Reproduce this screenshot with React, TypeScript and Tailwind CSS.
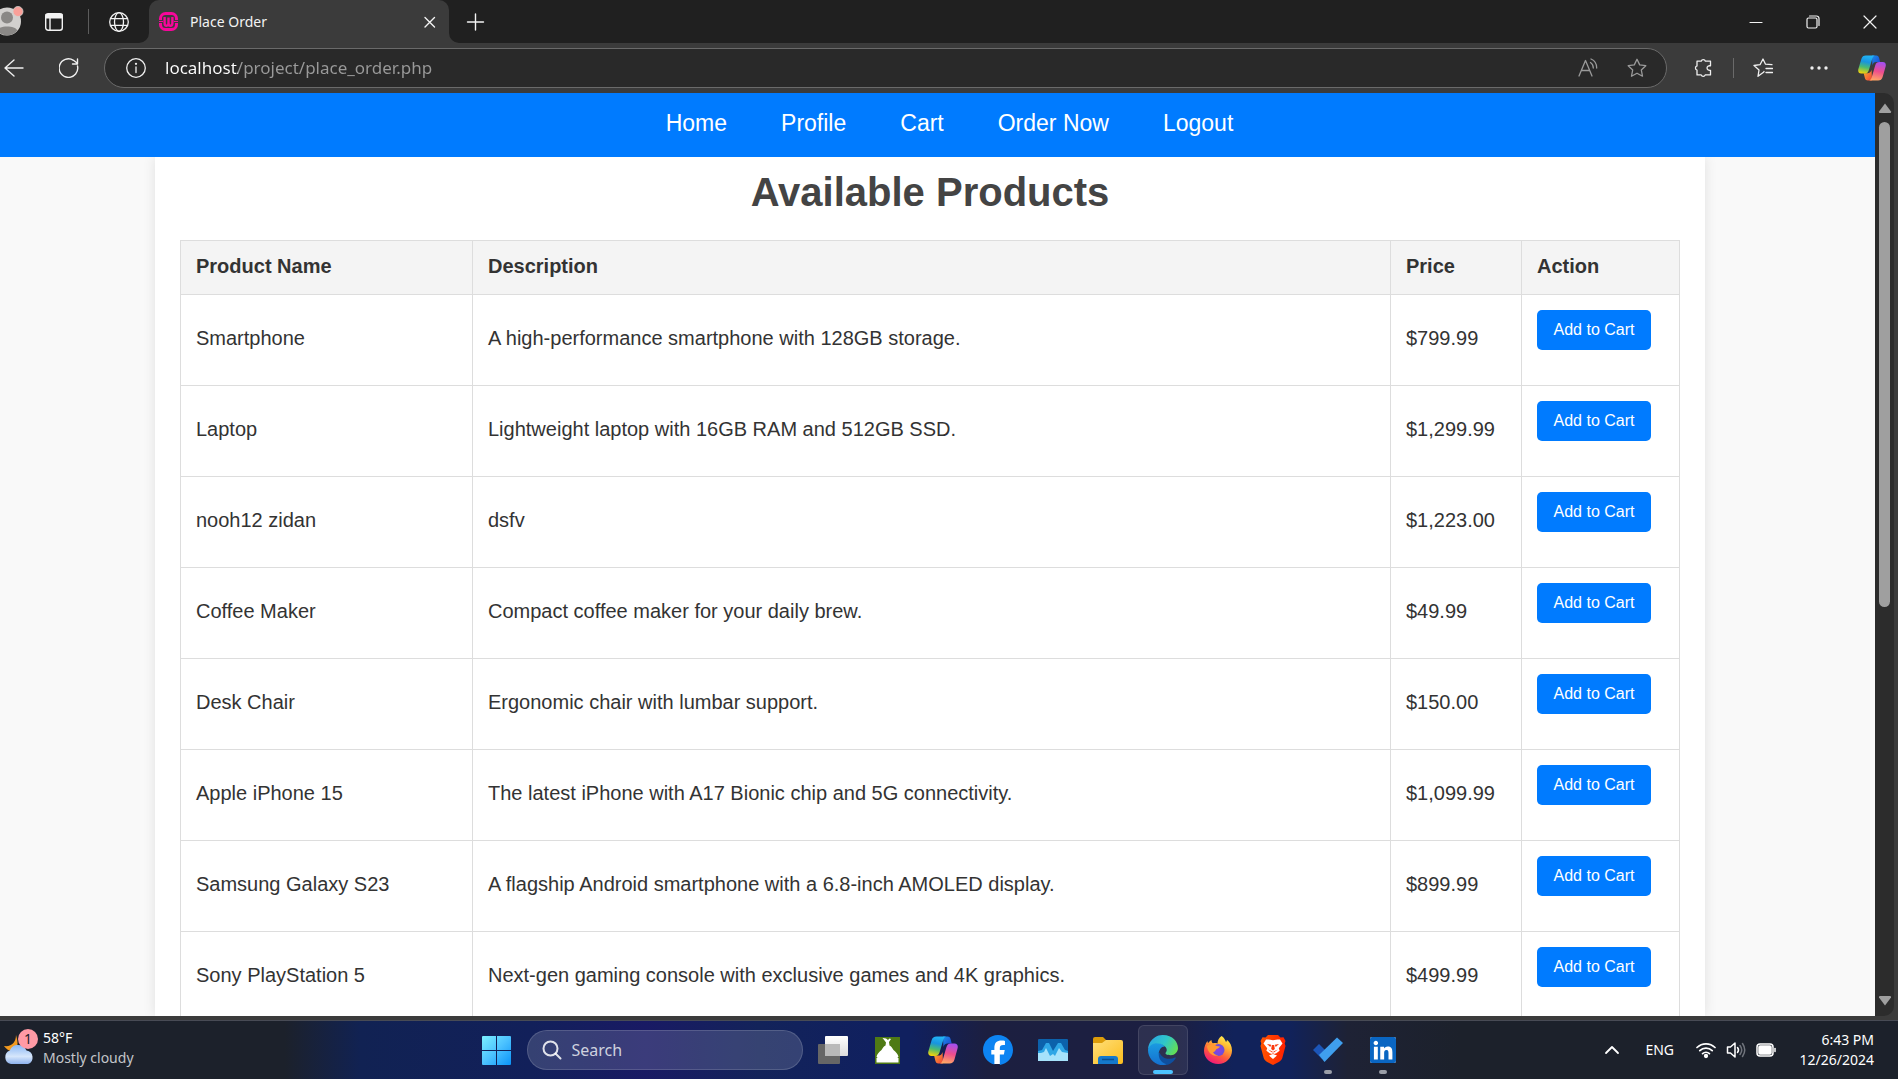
import type { ReactNode } from "react";
import { FaFacebook, FaLinkedin } from "react-icons/fa6";

type Product = { name: string; description: string; price: string };

const products: Product[] = [
  { name: "Smartphone", description: "A high-performance smartphone with 128GB storage.", price: "$799.99" },
  { name: "Laptop", description: "Lightweight laptop with 16GB RAM and 512GB SSD.", price: "$1,299.99" },
  { name: "nooh12 zidan", description: "dsfv", price: "$1,223.00" },
  { name: "Coffee Maker", description: "Compact coffee maker for your daily brew.", price: "$49.99" },
  { name: "Desk Chair", description: "Ergonomic chair with lumbar support.", price: "$150.00" },
  { name: "Apple iPhone 15", description: "The latest iPhone with A17 Bionic chip and 5G connectivity.", price: "$1,099.99" },
  { name: "Samsung Galaxy S23", description: "A flagship Android smartphone with a 6.8-inch AMOLED display.", price: "$899.99" },
  { name: "Sony PlayStation 5", description: "Next-gen gaming console with exclusive games and 4K graphics.", price: "$499.99" },
];

const links = ["Home", "Profile", "Cart", "Order Now", "Logout"];

function Line({ size = 20, width = 1.3, children }: { size?: number; width?: number; children: ReactNode }) {
  return (
    <svg
      width={size}
      height={size}
      viewBox={`0 0 ${size} ${size}`}
      fill="none"
      stroke="currentColor"
      strokeWidth={width}
      strokeLinecap="round"
      strokeLinejoin="round"
      className="shrink-0"
    >
      {children}
    </svg>
  );
}

function CopilotIcon({ id, size }: { id: string; size: number }) {
  return (
    <svg width={size} height={size} viewBox="0 0 30 30">
      <defs>
        <linearGradient id={`${id}-a`} x1="0.5" y1="0" x2="0.3" y2="1">
          <stop offset="0" stopColor="#22b4f5" />
          <stop offset="0.35" stopColor="#1894e0" />
          <stop offset="0.65" stopColor="#4cbb70" />
          <stop offset="1" stopColor="#f6d40a" />
        </linearGradient>
        <linearGradient id={`${id}-b`} x1="0.6" y1="0" x2="0.4" y2="1">
          <stop offset="0" stopColor="#a44ff0" />
          <stop offset="0.5" stopColor="#ee4d8d" />
          <stop offset="1" stopColor="#ffa765" />
        </linearGradient>
        <linearGradient id={`${id}-c`} x1="0" y1="0" x2="1" y2="1">
          <stop offset="0" stopColor="#1b8fe8" />
          <stop offset="1" stopColor="#1c3fd0" />
        </linearGradient>
        <linearGradient id={`${id}-d`} x1="0" y1="0" x2="1" y2="1">
          <stop offset="0" stopColor="#ffb02e" />
          <stop offset="1" stopColor="#f0413a" />
        </linearGradient>
      </defs>
      <path d="M15 1.500h4.500c2 0 2.700 1.200 3.200 3l1 4h-4c-2.500 0-3.600 1.200-4.300 3.600z" fill={`url(#${id}-c)`} />
      <path d="M15 28.500h-4.500c-2 0-2.700-1.200-3.200-3l-1.200-5h4c2.500 0 3.800-1.200 4.500-3.600z" fill={`url(#${id}-d)`} />
      <path d="M8.500 1.500h9.500c-1.500.6-2.200 1.800-2.800 3.800l-3.600 12c-.9 2.700-2.200 3.700-4.600 3.700H3.500C.8 21-.3 19 .4 16.200L3.600 5.300C4.400 2.700 5.900 1.500 8.500 1.500z" fill={`url(#${id}-a)`} />
      <path d="M21.500 28.500H12c1.500-.6 2.200-1.800 2.800-3.800l3.600-12.500C19.300 9.500 20.600 8.500 23 8.500h3.500c2.700 0 3.800 2 3.100 4.800l-3.200 11.400c-.8 2.600-2.300 3.800-4.900 3.800z" fill={`url(#${id}-b)`} />
    </svg>
  );
}

function WampFavicon() {
  return (
    <svg width="19" height="19" viewBox="0 0 19 19" fill="none" stroke="#f7079b" className="shrink-0">
      <path d="M1.500 8V6.500a5 5 0 0 1 5-5h6a5 5 0 0 1 5 5V8M1.500 11v1.500a5 5 0 0 0 5 5h6a5 5 0 0 0 5-5V11" strokeWidth="3" />
      <path d="M0 9.500h4M15 9.500h4" strokeWidth="1.200" />
      <path d="M5.600 5v6c0 3.600 3.900 3.600 3.900 0V5.500M13.400 5v6c0 3.600-3.900 3.600-3.900 0" strokeWidth="2.400" />
    </svg>
  );
}

function TabStrip() {
  return (
    <header className="flex h-[43px] shrink-0 items-stretch bg-[#202020] text-[#f3f3f3]">
      <div className="flex w-[149px] shrink-0 items-center">
        <button aria-label="Account" className="h-[32px] w-[24px]">
          <svg width="24" height="32" viewBox="0 0 24 32">
            <circle cx="7" cy="15.500" r="14" fill="#d2d0ce" />
            <circle cx="7" cy="11.500" r="6" fill="#8a8886" />
            <path d="M-3 24.500c2-5.500 18-5.500 20.500 0A14 14 0 0 1-3 25z" fill="#8a8886" />
            <circle cx="18" cy="5.500" r="5" fill="#f9a099" stroke="#d2d0ce" strokeWidth="0.800" />
          </svg>
        </button>
        <button aria-label="Tab actions" className="ml-5">
          <Line width={1.4}>
            <rect x="1.700" y="1.700" width="16.600" height="16.600" rx="2.500" />
            <path d="M2 2.500h16v3.200H2z" fill="currentColor" />
            <path d="M6 6v12" />
          </Line>
        </button>
        <span className="ml-6 h-[25px] w-px bg-[#5c5c5c]" />
        <button aria-label="Pinned tab" className="ml-5">
          <Line>
            <circle cx="10" cy="10" r="9.300" />
            <ellipse cx="10" cy="10" rx="4.500" ry="9.300" />
            <path d="M1.600 6.700h16.800M1.600 13.300h16.800" />
          </Line>
        </button>
      </div>
      <div className="relative flex w-[300px] items-center rounded-t-[10px] bg-[#3b3b3b] pl-[10px] pr-[7px]">
        <svg width="10" height="10" className="absolute -left-[10px] bottom-0">
          <path d="M10 0v10H0A10 10 0 0 0 10 0z" fill="#3b3b3b" />
        </svg>
        <svg width="10" height="10" className="absolute -right-[10px] bottom-0">
          <path d="M0 0v10h10A10 10 0 0 1 0 0z" fill="#3b3b3b" />
        </svg>
        <WampFavicon />
        <span className="ml-3 flex-1 text-sm">Place Order</span>
        <button aria-label="Close tab" className="p-1">
          <Line size={16} width={1.4}>
            <path d="M3 3.500l9.500 9.500M12.500 3.500L3 13" />
          </Line>
        </button>
      </div>
      <button aria-label="New tab" className="ml-4">
        <Line width={1.4}>
          <path d="M2.500 10h16M10.500 2v16" />
        </Line>
      </button>
      <div className="ml-auto flex items-center">
        <button aria-label="Minimize" className="flex w-[57px] justify-center">
          <Line size={14} width={1.2}>
            <path d="M1 7.500h12" />
          </Line>
        </button>
        <button aria-label="Restore" className="flex w-[57px] justify-center">
          <Line size={14} width={1.2}>
            <rect x="1" y="3" width="10" height="10" rx="1.500" />
            <path d="M3.500 1h7A2.500 2.500 0 0 1 13 3.500v7" />
          </Line>
        </button>
        <button aria-label="Close" className="flex w-[57px] justify-center">
          <Line size={14} width={1.2}>
            <path d="M1 1l12 12M13 1L1 13" />
          </Line>
        </button>
      </div>
    </header>
  );
}

function Toolbar() {
  return (
    <div className="flex h-[50px] shrink-0 items-center bg-[#3b3b3b] pb-px pl-1 pr-3 text-[#f0f0f0]">
      <button aria-label="Back">
        <Line width={1.4}>
          <path d="M1 10h18M10 2L1 10l9 8" />
        </Line>
      </button>
      <button aria-label="Refresh" className="ml-[35px]">
        <Line width={1.4} size={20}>
          <path d="M18.500 8A9.300 9.300 0 1 1 14.500 2.300L18 5M18.500 1v5h-5" />
        </Line>
      </button>
      <div className="ml-[25px] flex h-10 flex-1 items-center rounded-full border border-[#6a6a6a] bg-[#292929] pl-[21px] pr-[19px]">
        <button aria-label="Site information">
          <Line>
            <circle cx="10" cy="10" r="9.300" />
            <path d="M10 9v5.500" />
            <circle cx="10" cy="5.800" r="0.500" fill="currentColor" />
          </Line>
        </button>
        <input
          aria-label="Address"
          defaultValue="localhost/project/place_order.php"
          className="ml-[19px] min-w-0 flex-1 bg-[linear-gradient(90deg,#ffffff_73px,#9a9a9a_73px)] bg-clip-text text-[17px] text-transparent outline-none"
        />
        <button aria-label="Read aloud" className="text-[#9a9a9a]">
          <Line>
            <path d="M1 18L7.500 2.500 14 18M3.500 12.500h8M12.500 4.500c2 1.300 2.800 3.200 2.800 5.500M13 1c3.800 1.600 5.700 4.500 5.700 9" />
          </Line>
        </button>
        <button aria-label="Add to favorites" className="ml-[29px] text-[#9a9a9a]">
          <Line>
            <path d="M10 1.300l2.700 5.600 6.100.8-4.500 4.300 1.200 6.200L10 15.200l-5.500 3 1.200-6.200L1.200 7.700l6.100-.8z" />
          </Line>
        </button>
      </div>
      <button aria-label="Extensions" className="ml-[26px]">
        <Line>
          <path d="M4 3.200h4.200a2.200 2.200 0 0 1 4.200 0H17.500V7.800c-4.600-.6-4.600 5.200 0 4.500v4.600h-5.300a2.100 2.100 0 0 1-4 0H4v-4.800a2.200 2.200 0 0 1 0-4.200z" />
        </Line>
      </button>
      <span className="ml-5 h-5 w-px bg-[#6a6a6a]" />
      <button aria-label="Favorites" className="ml-[19px]">
        <Line size={20}>
          <path d="M11 13.500l-.5.800-5.500 4 1-6.300L1 7.500l6-.8 3-5.700 2.500 5.200 6.500.5M13 10.500h6.500M13 14.500h6.500" />
        </Line>
      </button>
      <button aria-label="Settings and more" className="ml-9">
        <svg width="20" height="20" fill="currentColor">
          <circle cx="3" cy="10" r="1.700" />
          <circle cx="10" cy="10" r="1.700" />
          <circle cx="17" cy="10" r="1.700" />
        </svg>
      </button>
      <button aria-label="Copilot" className="ml-[29px]">
        <CopilotIcon id="bar" size={28} />
      </button>
    </div>
  );
}

function ProductTable() {
  return (
    <table className="w-full border-collapse text-left text-xl text-[#333333]">
      <thead>
        <tr className="h-[54px] bg-[#f4f4f4]">
          <th className="w-[292px] border border-[#dddddd] px-[15px] pb-1 font-bold">Product Name</th>
          <th className="border border-[#dddddd] px-[15px] pb-1 font-bold">Description</th>
          <th className="w-[131px] border border-[#dddddd] px-[15px] pb-1 font-bold">Price</th>
          <th className="w-[158px] border border-[#dddddd] px-[15px] pb-1 font-bold">Action</th>
        </tr>
      </thead>
      <tbody>
        {products.map((product) => (
          <tr key={product.name}>
            <td className="border border-[#dddddd] px-[15px] pb-1">{product.name}</td>
            <td className="border border-[#dddddd] px-[15px] pb-1">{product.description}</td>
            <td className="border border-[#dddddd] px-[15px] pb-1">{product.price}</td>
            <td className="border border-[#dddddd] px-[15px] pb-[35px] pt-[15px]">
              <button className="block h-10 w-[114px] whitespace-nowrap rounded-[5px] bg-[#007bff] pb-px text-base text-white">
                Add to Cart
              </button>
            </td>
          </tr>
        ))}
      </tbody>
    </table>
  );
}

function ShopPage() {
  return (
    <main className="flex min-w-0 flex-1 flex-col overflow-hidden bg-[#f9f9f9] font-['Liberation_Sans',Arial,sans-serif]">
      <nav className="relative flex h-16 shrink-0 items-center justify-center gap-[54px] bg-[#007bff] pl-6 text-[23px] text-white">
        {links.map((label) => (
          <a key={label} href="#" className="whitespace-nowrap pb-1">
            {label}
          </a>
        ))}
      </nav>
      <div className="flex min-h-0 flex-1 justify-center pr-[15px]">
        <section className="w-full max-w-[1550px] bg-white px-[25px] shadow-[0_0_12px_rgba(0,0,0,0.1)]">
          <h1 className="mb-[23px] mt-[10px] text-center text-[40px] font-bold leading-[50px] text-[#444444]">Available Products</h1>
          <ProductTable />
        </section>
      </div>
    </main>
  );
}

function ScrollBar() {
  return (
    <div className="mr-1 flex w-[19px] shrink-0 flex-col items-center rounded-r-[10px] bg-[#2c2c2c] py-[10px] text-[#9f9f9f]">
      <svg width="14" height="10" fill="currentColor">
        <path d="M7 0.500L13 8.500q.5 1.500-1 1.500H2q-1.500 0-1-1.500z" />
      </svg>
      <div className="mt-[9px] min-h-0 w-[11px] flex-1">
        <div className="h-[56%] rounded-full bg-[#9f9f9f]" />
      </div>
      <svg width="14" height="10" fill="currentColor" className="mt-2">
        <path d="M7 9.500L13 1.500q.5-1.500-1-1.500H2Q.5 0 1 1.500z" />
      </svg>
    </div>
  );
}

function EdgeIcon() {
  return (
    <svg width="30" height="30" viewBox="0 0 512 512">
      <defs>
        <linearGradient id="edge-a" x1="0" y1="0.300" x2="1" y2="0.700">
          <stop offset="0" stopColor="#2aa7e3" />
          <stop offset="0.500" stopColor="#2fc6c9" />
          <stop offset="1" stopColor="#66e04f" />
        </linearGradient>
        <linearGradient id="edge-b" x1="0.500" y1="0" x2="0.500" y2="1">
          <stop offset="0" stopColor="#1b9de2" />
          <stop offset="1" stopColor="#1470cf" />
        </linearGradient>
      </defs>
      <path d="M198 297C225 365 290 409 368 407c31 0 62-7 90-21 20-10 20 5 12 14-75 120-200 137-280 80-60-60-60-150 8-183z" fill="#0f4f9e" />
      <path d="M0 258c0-70 62-135 136-135 70 0 120 30 150 73-60 0-103 60-103 130 0 90 50 150 130 172-40 20-80 18-105 14C90 490 0 380 0 258z" fill="url(#edge-b)" />
      <path d="M120 37C161 12 208-1 255 0c168 0 257 124 257 220 0 68-56 123-123 124-75 0-91-23-91-32 0-5 3-8 6-12 10-12 16-27 16-42 0-60-75-118-184-118C80 140 30 175 2 235 10 140 60 75 120 37z" fill="url(#edge-a)" />
    </svg>
  );
}

function FirefoxIcon() {
  return (
    <svg width="30" height="30" viewBox="0 0 30 30">
      <defs>
        <linearGradient id="fox-a" x1="0.800" y1="0" x2="0.300" y2="1">
          <stop offset="0" stopColor="#fff44f" />
          <stop offset="0.350" stopColor="#ffb031" />
          <stop offset="0.650" stopColor="#ff5a3c" />
          <stop offset="1" stopColor="#f0157c" />
        </linearGradient>
        <radialGradient id="fox-b">
          <stop offset="0" stopColor="#8a3fe8" />
          <stop offset="1" stopColor="#6a4fd8" />
        </radialGradient>
      </defs>
      <path d="M18.500 1c2.200 1 3.500 3.500 4.500 6 .8-.3 1-1.200.8-2.200C27 7 29 11 29 15.500 29 23 23 29 15.200 29S1 23.500 1 15.800C1 12 2.500 8.500 4.500 6c0 1 .2 1.700.6 2C6 7 7.500 5.500 8.500 5c0 1.300.3 2.600 1.500 3.300 1.500-.3 3-.3 4.500.2C14.500 5.500 16 2.500 18.500 1z" fill="url(#fox-a)" />
      <circle cx="15.500" cy="15" r="6" fill="url(#fox-b)" />
      <path d="M4 11c3-2 7-2 9.500 0l3.500.5c-.5 1.800-3 2-3.500 2.500-1 1-1.500 3-3.500 3.200 1 2 3 2.800 5.500 2.800-5 2.500-11-2-11.500-9z" fill="#ff9a32" />
    </svg>
  );
}

function BraveIcon() {
  return (
    <svg width="26" height="30" viewBox="0 0 26 30">
      <defs>
        <linearGradient id="brave" x1="0" y1="0" x2="1" y2="0">
          <stop offset="0" stopColor="#ff5500" />
          <stop offset="1" stopColor="#ff2000" />
        </linearGradient>
      </defs>
      <path d="M8 0h10l2.500 2.500 3-.2L25.500 6l-.8 2.500.8 2.500-3.200 12c-.5 1.800-2 3-3.500 4L13 30l-5.800-3c-1.500-1-3-2.200-3.500-4L.5 11l.8-2.500L.5 6l2-3.700 3 .2z" fill="url(#brave)" />
      <path d="M8.500 4.500l4.500.8 4.500-.8L20 4.500l2.500 4-3.700 4.700.8 2.600-3.300 2.400-2.300.8L13 18l-1 1-2.300-.8-3.300-2.400.8-2.600L3.500 8.500l2.500-4zM9 20.500l4-1.600 4 1.600-4 3.600z" fill="#fff" />
      <path d="M7 9l4.200.8-.9 2.200zM19 9l-4.200.8.9 2.200zM11.800 10h2.400l.6 4-1.800 1.400-1.800-1.400zM8 14.500l4.500 2v1.300zM18 14.500l-4.500 2v1.300z" fill="#fb3a0c" />
    </svg>
  );
}

type TaskApp = { label: string; icon: ReactNode; state?: "active" | "running" };

const apps: TaskApp[] = [
  {
    label: "Task View",
    icon: (
      <svg width="30" height="28">
        <defs>
          <linearGradient id="tv" x1="0" y1="0" x2="0" y2="1">
            <stop offset="0" stopColor="#ffffff" />
            <stop offset="1" stopColor="#dcdcdc" />
          </linearGradient>
        </defs>
        <rect x="0" y="8" width="22" height="20" rx="1" fill="#666666" />
        <rect x="7" y="0" width="23" height="20" rx="1" fill="url(#tv)" />
        <rect x="7" y="8" width="15" height="12" fill="#b9b9b9" />
      </svg>
    ),
  },
  {
    label: "WampServer",
    icon: (
      <svg width="25" height="27">
        <rect width="25" height="27" fill="#4f7a14" />
        <path d="M7.500 1l3.500.500 2 1.500 1.500-1.500 1.500.500-2 3 .5 3.500c2 .8 2.500 2.500 4 4.500 2.300 2 4.700 4 5 7h-22c.3-3 2.700-5 5-7 1.500-2 2-3.700 4-4.500l.5-3L9.500 3.500z" fill="#fff" />
        <path d="M3 19.500h19l1.500 2v4h-22v-4z" fill="#fff" />
      </svg>
    ),
  },
  { label: "Copilot", icon: <CopilotIcon id="task" size={30} /> },
  {
    label: "Facebook",
    icon: (
      <span className="block rounded-full bg-[radial-gradient(#ffffff_66%,transparent_67%)]">
        <FaFacebook size={30} color="#0d84f2" />
      </span>
    ),
  },
  {
    label: "Resource Monitor",
    icon: (
      <svg width="30" height="22">
        <rect width="30" height="22" rx="1" fill="#0c61ab" />
        <path d="M0 12l4-1 4-7h3l4 8 5-8h3l4 7 3 1v10H0z" fill="#2fa6e6" />
        <path d="M0 14h3l3-1 2-4 4 8 3-2 2 2 4-8 3 4 6 1v8H0z" fill="#a6e2fb" />
      </svg>
    ),
  },
  {
    label: "File Explorer",
    icon: (
      <svg width="30" height="27">
        <defs>
          <linearGradient id="folder" x1="0" y1="0" x2="1" y2="1">
            <stop offset="0" stopColor="#ffdf7a" />
            <stop offset="1" stopColor="#fbbd1d" />
          </linearGradient>
        </defs>
        <path d="M0 2q0-2 2-2h8l3 3v5H0z" fill="#dc9c0a" />
        <path d="M0 6h9l4-3h15q2 0 2 2v20q0 2-2 2H0z" fill="url(#folder)" />
        <path d="M5 27v-5q0-3 3-3h14q3 0 3 3v5z" fill="#1579cc" />
        <path d="M9 22.500h12" stroke="#0b4f91" strokeWidth="1.500" />
      </svg>
    ),
  },
  { label: "Microsoft Edge", icon: <EdgeIcon />, state: "active" },
  { label: "Firefox", icon: <FirefoxIcon /> },
  { label: "Brave", icon: <BraveIcon /> },
  {
    label: "To Do",
    icon: (
      <svg width="30" height="26">
        <path d="M0 13l6-6 8 8-5 7z" fill="#1c56b8" />
        <path d="M6 18L24 0.500l6 5.500-18.500 19z" fill="#3f9fee" />
      </svg>
    ),
    state: "running",
  },
  {
    label: "LinkedIn",
    icon: (
      <span className="block h-[26px] w-[26px] overflow-hidden rounded-[2px] bg-white">
        <FaLinkedin size={30} color="#0a66c2" className="-ml-0.5 -mt-0.5" />
      </span>
    ),
    state: "running",
  },
];

function TaskButton({ app }: { app: TaskApp }) {
  const active = app.state === "active";
  return (
    <button
      aria-label={app.label}
      className={`relative flex h-[50px] w-[50px] items-center justify-center rounded-md ${active ? "border border-white/10 bg-white/8" : ""}`}
    >
      {app.icon}
      {active && <span className="absolute bottom-0 h-1 w-5 rounded-full bg-[#4cc2ff]" />}
      {app.state === "running" && <span className="absolute bottom-px h-1 w-2 rounded-full bg-[#9a9ea8]" />}
    </button>
  );
}

function Taskbar() {
  return (
    <footer className="grid h-[58px] shrink-0 grid-cols-[1fr_auto_1fr] items-center bg-[linear-gradient(90deg,#1c212b_15%,#112253_19%,#12205a_28%,#191a64_34%,#13235a_40%,#10205f_46%,#10205f_48%,#1c1f40_52%,#1c1f42_62%,#11225a_65%,#11225a_68%,#1e2235_71%,#1c212b_77%)] text-white">
      <button className="flex items-center self-start pl-1 pt-[7px] text-left">
        <svg width="36" height="38">
          <defs>
            <linearGradient id="cloud" x1="0" y1="0" x2="0" y2="1">
              <stop offset="0" stopColor="#8cb8f5" />
              <stop offset="0.600" stopColor="#d6e6fb" />
              <stop offset="1" stopColor="#8db2ee" />
            </linearGradient>
          </defs>
          <path d="M12 6c2 7 3 12-3 17-4-1-7-3-9-6 8 1 12-4 12-11z" fill="#f39a1f" />
          <path d="M7 35a7 7 0 0 1-1-13.500C7 18 10 16 14 16s7 2 8.500 5.500A7 7 0 0 1 24 35z" fill="url(#cloud)" />
          <circle cx="24" cy="10" r="10" fill="#ff9aa5" />
          <text x="24" y="15" textAnchor="middle" fontSize="14" fill="#1c212b">
            1
          </text>
        </svg>
        <span className="ml-[3px] flex flex-col text-sm leading-5">
          <span>58°F</span>
          <span className="text-[#c3c5c9]">Mostly cloudy</span>
        </span>
      </button>
      <div className="mr-[19px] flex items-center gap-[5px]">
        <button aria-label="Start" className="flex h-[50px] w-[50px] items-center justify-center">
          <svg width="29" height="29">
            <defs>
              <linearGradient id="win" gradientUnits="userSpaceOnUse" x1="0" y1="0" x2="29" y2="29">
                <stop offset="0" stopColor="#7cf0ff" />
                <stop offset="0.500" stopColor="#4cc2ff" />
                <stop offset="1" stopColor="#0a93f8" />
              </linearGradient>
            </defs>
            <path d="M0 1q0-1 1-1h13v14H0zM15 0h13q1 0 1 1v13H15zM0 15h14v14H1q-1 0-1-1zM15 15h14v13q0 1-1 1H15z" fill="url(#win)" />
          </svg>
        </button>
        <label className="flex h-10 w-[276px] items-center rounded-full border border-white/15 bg-white/15 pl-[14px] text-white/85">
          <Line width={2}>
            <circle cx="8.500" cy="8.500" r="7" />
            <path d="M13.500 13.500l5 5" />
          </Line>
          <input
            type="text"
            aria-label="Search"
            placeholder="Search"
            className="ml-[10px] w-full min-w-0 bg-transparent text-base outline-none placeholder:text-[#cfd2df]"
          />
        </label>
        {apps.map((app) => (
          <TaskButton key={app.label} app={app} />
        ))}
      </div>
      <div className="flex items-center justify-end pr-6 text-sm">
        <button aria-label="Show hidden icons">
          <Line size={16} width={1.8}>
            <path d="M2 11l6-6 6 6" />
          </Line>
        </button>
        <span className="ml-[25px]">ENG</span>
        <button aria-label="Network, sound and battery" className="ml-[22px] flex items-center gap-[10px]">
          <Line width={1.700}>
            <path d="M1 7.500a13 13 0 0 1 18 0M3.800 10.700a9 9 0 0 1 12.400 0M6.600 13.700a5 5 0 0 1 6.800 0" />
            <circle cx="10" cy="16" r="1.300" fill="currentColor" />
          </Line>
          <Line width={1.500}>
            <path d="M1.500 7v6h3L9 17V3L4.500 7z" />
            <path d="M11.500 7.500q2 2.500 0 5" />
            <path d="M14 5.500q3.500 4.500 0 9M16.500 3.500q4.500 6.500 0 13" stroke="#70747c" />
          </Line>
          <Line width={1.500}>
            <rect x="1" y="4" width="16" height="12" rx="3" />
            <rect x="3" y="6" width="12" height="8" rx="1" fill="currentColor" />
            <path d="M19 8.500v3" />
          </Line>
        </button>
        <button className="ml-5 w-[78px] whitespace-nowrap text-right leading-5">
          6:43 PM
          <br />
          12/26/2024
        </button>
      </div>
    </footer>
  );
}

export default function App() {
  return (
    <div className="flex h-screen flex-col overflow-hidden bg-[#3b3b3b] font-['Noto_Sans','Open_Sans',sans-serif]">
      <TabStrip />
      <Toolbar />
      <div className="flex min-h-0 flex-1">
        <ShopPage />
        <ScrollBar />
      </div>
      <div className="h-[5px] shrink-0 border-b border-[#484b55] bg-[#3b3b3b]" />
      <Taskbar />
    </div>
  );
}
